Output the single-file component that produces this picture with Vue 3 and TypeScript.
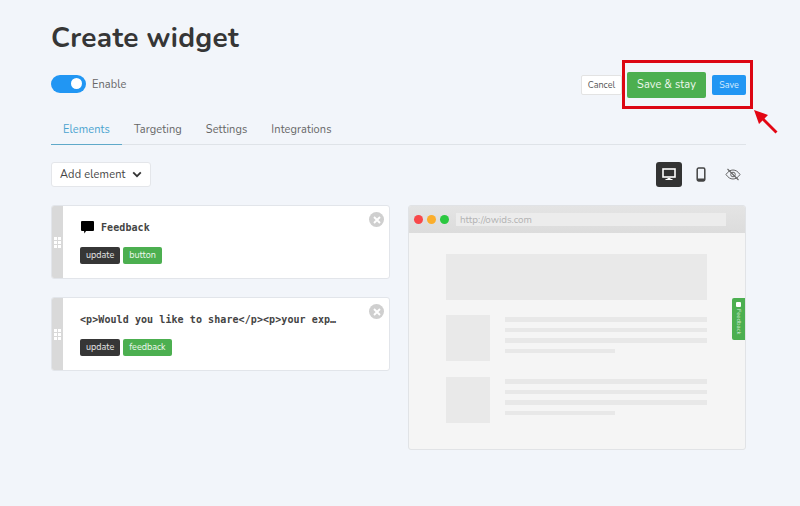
<script setup lang="ts">
const tabs: string[] = ['Elements', 'Targeting', 'Settings', 'Integrations']
const cards = [
  { title: 'Feedback', icon: true, tag: 'button' },
  { title: '<p>Would you like to share</p><p>your exp…', icon: false, tag: 'feedback' },
]
const rows = [0, 1]
const lines = [0, 1, 2, 3]
</script>

<template>
  <main class="page">
    <h1 class="title">Create widget</h1>
    <div class="toolbar">
      <div class="enable">
        <span class="toggle"><span class="knob"></span></span>
        <span class="enable-label">Enable</span>
      </div>
      <div class="actions">
        <button class="btn cancel">Cancel</button>
        <button class="btn stay">Save &amp; stay</button>
        <button class="btn save">Save</button>
      </div>
      <div class="highlight"></div>
      <svg class="arrow" width="30" height="30" viewBox="0 0 30 30">
        <path d="M2 2 L16 7 L12.500 10.500 L25.500 23.500 L23.500 25.500 L10.500 12.500 L7 16 Z" fill="#e30613" />
      </svg>
    </div>
    <nav class="tabs">
      <a v-for="(t, i) in tabs" :key="t" class="tab" :class="{ active: i === 0 }">{{ t }}</a>
    </nav>
    <div class="controls">
      <button class="add"><span>Add element</span>
        <svg width="10" height="7" viewBox="0 0 10 7"><path d="M1.200 1.400 L5 5.200 L8.800 1.400" fill="none" stroke="#333" stroke-width="1.800" /></svg>
      </button>
      <div class="views">
        <span class="view on">
          <svg width="14" height="13" viewBox="0 0 14 13"><rect x="1" y="1" width="12" height="8" fill="none" stroke="#fff" stroke-width="1.600" /><path d="M5.500 10h3v1h2v1h-7v-1h2z" fill="#fff" /></svg>
        </span>
        <span class="view">
          <svg width="10" height="15" viewBox="0 0 10 15"><rect x="1.200" y="1" width="7.600" height="13" rx="1.400" fill="none" stroke="#444" stroke-width="1.500" /><path d="M1.500 11.500h7V14h-7z" fill="#444" /></svg>
        </span>
        <span class="view">
          <svg width="16" height="13" viewBox="0 0 16 13"><path d="M1 6.500C3 3.500 5.300 2 8 2s5 1.500 7 4.500C13 9.500 10.700 11 8 11S3 9.500 1 6.500Z" fill="none" stroke="#666" stroke-width="1" /><circle cx="8" cy="6.500" r="2.300" fill="none" stroke="#666" stroke-width="1" /><path d="M2.500 1 L13.500 12" stroke="#666" stroke-width="1.100" /></svg>
        </span>
      </div>
    </div>
    <div class="columns">
      <div class="cards">
        <article v-for="c in cards" :key="c.tag" class="card">
          <div class="handle"><span v-for="n in 6" :key="n" class="dot"></span></div>
          <div class="card-body">
            <div class="card-title">
              <svg v-if="c.icon" class="bubble" width="13" height="13" viewBox="0 0 13 13"><path d="M1 0h11a1 1 0 0 1 1 1v8a1 1 0 0 1-1 1H5l-1.500 2.500L3 10H1a1 1 0 0 1-1-1V1a1 1 0 0 1 1-1z" fill="#000" /></svg>
              <span class="card-text">{{ c.title }}</span>
            </div>
            <div class="tags">
              <span class="tag dark">update</span>
              <span class="tag green">{{ c.tag }}</span>
            </div>
          </div>
          <span class="close">
            <svg width="8" height="8" viewBox="0 0 8 8"><path d="M1 1l6 6M7 1L1 7" stroke="#fff" stroke-width="1.900" /></svg>
          </span>
        </article>
      </div>
      <section class="preview">
        <header class="chrome">
          <span class="light red"></span><span class="light amber"></span><span class="light lime"></span>
          <span class="url">http://owids.com</span>
        </header>
        <div class="site">
          <div class="hero"></div>
          <div v-for="r in rows" :key="r" class="row">
            <div class="thumb"></div>
            <div class="lines">
              <div v-for="l in lines" :key="l" class="line" :class="{ short: l === 3 }"></div>
            </div>
          </div>
          <div class="tab-widget">
            <span class="widget-icon"></span>
            <span class="widget-text">Feedback</span>
          </div>
        </div>
      </section>
    </div>
  </main>
</template>

<style>
html, body { margin: 0; background: #f2f5fa; }
</style>

<style scoped>
.page {
  box-sizing: border-box;
  width: 800px;
  height: 506px;
  padding: 0 54px 0 51px;
  overflow: hidden;
  font-family: "Nunito", "Lato", "Open Sans", sans-serif;
  color: #333;
  background: #f2f5fa;
}
.title {
  margin: 0;
  padding-top: 19px;
  font-size: 28px;
  line-height: 38px;
  font-weight: 700;
  color: #363636;
  letter-spacing: 0.28px;
}
.toolbar {
  position: relative;
  display: flex;
  align-items: center;
  justify-content: space-between;
  height: 31px;
  margin-top: 12px;
}
.enable { display: flex; align-items: center; gap: 6px; }
.toggle {
  display: flex;
  align-items: center;
  justify-content: flex-end;
  box-sizing: border-box;
  width: 35px;
  height: 18px;
  margin-top: -2px;
  padding-right: 4px;
  border-radius: 9px;
  background: #2196f3;
}
.knob { width: 11px; height: 11px; border-radius: 50%; background: #fff; }
.enable-label { font-size: 11px; color: #666; letter-spacing: 0.1px; }
.actions { display: flex; align-items: center; }
.btn {
  border: 0;
  font-family: inherit;
  padding: 0;
  border-radius: 2px;
}
.cancel {
  width: 41px;
  height: 20px;
  border: 1px solid #e3e3e3;
  background: #fff;
  color: #555;
  font-size: 9px;
  box-sizing: border-box;
}
.stay {
  width: 79px;
  height: 26px;
  margin-left: 5px;
  background: #4caf50;
  color: #eef7ee;
  font-size: 11px;
  letter-spacing: 0.1px;
}
.save {
  width: 34px;
  height: 20px;
  margin-left: 6px;
  background: #2196f3;
  color: #d9edfd;
  font-size: 9px;
}
.highlight {
  position: absolute;
  left: 571px;
  top: -9px;
  width: 131px;
  height: 49px;
  box-sizing: border-box;
  border: 3px solid #dc0612;
}
.arrow { position: absolute; left: 701px; top: 39px; }
.tabs {
  display: flex;
  height: 31px;
  margin-top: 13px;
  border-bottom: 1px solid #dfe3e8;
  box-sizing: content-box;
}
.tab {
  padding: 8px 12px 0;
  font-size: 11px;
  line-height: 18px;
  color: #666;
  letter-spacing: 0.1px;
}
.tab.active { color: #4aa3cf; box-shadow: 0 1px 0 #5fa9c9; }
.controls {
  display: flex;
  align-items: center;
  justify-content: space-between;
  height: 25px;
  margin-top: 17px;
}
.add {
  display: flex;
  align-items: center;
  gap: 6px;
  box-sizing: border-box;
  width: 100px;
  height: 25px;
  padding: 0 0 0 8px;
  border: 1px solid #e4e6ea;
  border-radius: 3px;
  background: #fff;
  font-family: inherit;
  font-size: 11px;
  color: #444;
  letter-spacing: 0.15px;
  white-space: nowrap;
}
.views { display: flex; align-items: center; gap: 6px; }
.view {
  display: flex;
  align-items: center;
  justify-content: center;
  width: 26px;
  height: 25px;
  border-radius: 3px;
}
.view.on { background: #333; }
.columns {
  display: grid;
  grid-template-columns: 339px 338px;
  justify-content: space-between;
  margin-top: 18px;
}
.cards { display: flex; flex-direction: column; gap: 18px; }
.card {
  position: relative;
  display: flex;
  height: 74px;
  box-sizing: border-box;
  border: 1px solid #e2e5ea;
  border-radius: 3px;
  background: #fff;
  overflow: hidden;
}
.handle {
  display: grid;
  grid-template-columns: repeat(2, 3px);
  grid-auto-rows: 3px;
  gap: 1px;
  align-content: center;
  justify-content: center;
  width: 11px;
  background: #d9d9d9;
  flex: none;
}
.dot { background: #fff; }
.card-body { flex: 1; min-width: 0; padding: 10px 40px 0 17px; }
.card-title {
  display: flex;
  align-items: center;
  gap: 7px;
  height: 22px;
  font-family: "DejaVu Sans Mono", monospace;
  font-weight: 700;
  font-size: 10px;
  letter-spacing: 0.08px;
  color: #444;
}
.bubble { flex: none; margin-left: 1px; }
.card-text { white-space: nowrap; }
.tags { display: flex; gap: 3px; margin-top: 9px; }
.tag {
  height: 17px;
  padding: 0 6px;
  border-radius: 2px;
  font-size: 9px;
  line-height: 17px;
  color: #e6e6e6;
}
.tag.dark { background: #363636; }
.tag.green { background: #4caf50; color: #eef7ee; }
.close {
  position: absolute;
  right: 5px;
  top: 6px;
  display: flex;
  align-items: center;
  justify-content: center;
  width: 15px;
  height: 15px;
  border-radius: 50%;
  background: #cfcfcf;
}
.preview {
  height: 245px;
  box-sizing: border-box;
  border: 1px solid #e1e3e6;
  border-radius: 3px;
  background: #f5f5f5;
  overflow: hidden;
}
.chrome {
  display: flex;
  align-items: center;
  height: 27px;
  padding-left: 5px;
  background: linear-gradient(#e4e4e4, #dcdcdc);
}
.light { width: 9px; height: 9px; border-radius: 50%; margin-right: 4px; }
.red { background: #f8484a; }
.amber { background: #fbae2c; }
.lime { background: #2bc840; }
.url {
  flex: none;
  width: 270px;
  height: 13px;
  margin-left: 3px;
  padding-left: 4px;
  box-sizing: border-box;
  background: #ececec;
  color: #b3b3b3;
  font-size: 9.800px;
  line-height: 13px;
}
.site { position: relative; padding: 21px 38px 0 37px; }
.hero { height: 46px; background: #e9e9e9; }
.row { display: flex; gap: 15px; margin-top: 15px; margin-bottom: 16px; }
.thumb { width: 44px; height: 46px; background: #e9e9e9; flex: none; }
.lines { flex: 1; display: flex; flex-direction: column; gap: 6px; padding-top: 2px; }
.line { height: 4.500px; background: #e8e8e8; }
.line.short { width: 110px; }
.tab-widget {
  position: absolute;
  right: 0;
  top: 65px;
  display: flex;
  flex-direction: column;
  align-items: center;
  width: 13px;
  height: 42px;
  border-radius: 2px 0 0 2px;
  background: #4caf50;
}
.widget-icon { width: 5px; height: 5px; margin-top: 4px; background: #fff; border-radius: 1px; }
.widget-text {
  writing-mode: vertical-rl;
  font-size: 6px;
  line-height: 8px;
  margin-top: 2px;
  color: #d5ecd6;
}
</style>
